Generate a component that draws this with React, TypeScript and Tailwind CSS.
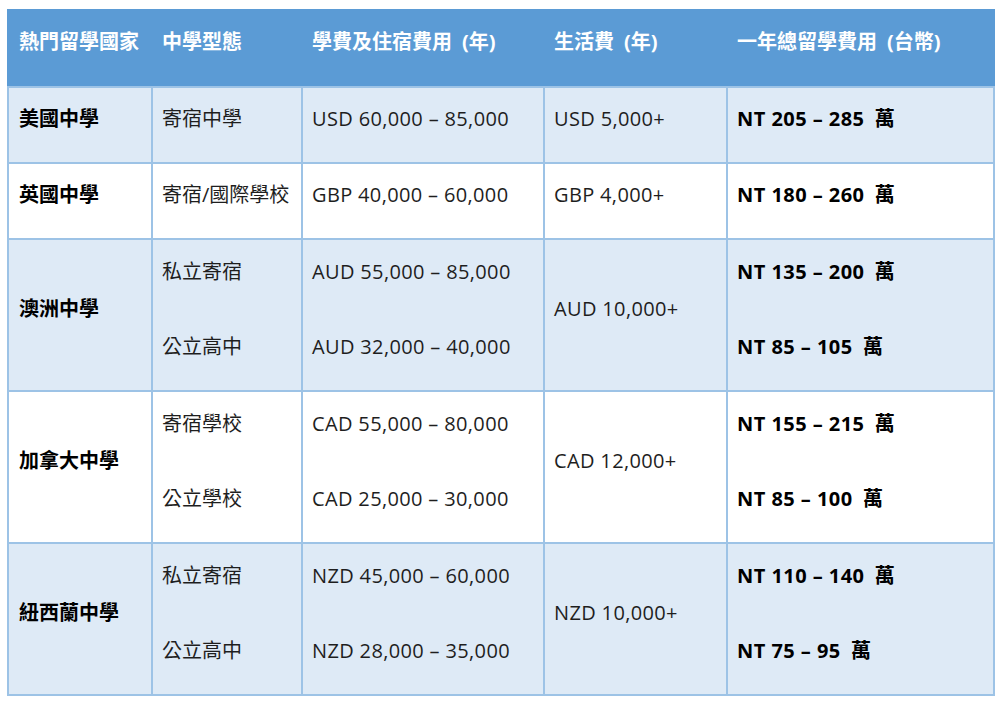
const font = "font-['Open_Sans','Noto_Sans_CJK_TC',sans-serif]";

type Row = {
  country: string;
  types: string[];
  tuition: string[];
  living: string;
  total: string[];
  light: boolean;
};

const rows: Row[] = [
  {
    country: "美國中學",
    types: ["寄宿中學"],
    tuition: ["USD 60,000 – 85,000"],
    living: "USD 5,000+",
    total: ["NT 205 – 285"],
    light: true,
  },
  {
    country: "英國中學",
    types: ["寄宿/國際學校"],
    tuition: ["GBP 40,000 – 60,000"],
    living: "GBP 4,000+",
    total: ["NT 180 – 260"],
    light: false,
  },
  {
    country: "澳洲中學",
    types: ["私立寄宿", "公立高中"],
    tuition: ["AUD 55,000 – 85,000", "AUD 32,000 – 40,000"],
    living: "AUD 10,000+",
    total: ["NT 135 – 200", "NT 85 – 105"],
    light: true,
  },
  {
    country: "加拿大中學",
    types: ["寄宿學校", "公立學校"],
    tuition: ["CAD 55,000 – 80,000", "CAD 25,000 – 30,000"],
    living: "CAD 12,000+",
    total: ["NT 155 – 215", "NT 85 – 100"],
    light: false,
  },
  {
    country: "紐西蘭中學",
    types: ["私立寄宿", "公立高中"],
    tuition: ["NZD 45,000 – 60,000", "NZD 28,000 – 35,000"],
    living: "NZD 10,000+",
    total: ["NT 110 – 140", "NT 75 – 95"],
    light: true,
  },
];

const cols = "grid grid-cols-[142px_148px_240px_181px_265px] gap-[2px]";

function Stack({ items, kind }: { items: string[]; kind: "cjk" | "num" | "total" }) {
  return (
    <div className="flex flex-col">
      {items.map((t) => (
        <div
          key={t}
          className={`flex items-center pl-[9px] pb-[12px] whitespace-pre ${
            items.length > 1 ? "h-[75px]" : "h-[74px]"
          } ${kind === "total" ? "font-bold text-black" : "text-[#1e1e1e]"}`}
        >
          {kind === "total" ? (
            <>
              <span className="tracking-[0.45px]">{t}</span>
              {"  萬"}
            </>
          ) : kind === "num" ? (
            <span className="tracking-[0.35px]">{t}</span>
          ) : (
            t
          )}
        </div>
      ))}
    </div>
  );
}

export default function App() {
  return (
    <div className={`min-h-screen bg-white pt-[9px] pl-[7px] text-[20px] leading-none ${font}`}>
      <div className="w-[988px]">
        <div className={`${cols} h-[77px] bg-[#5b9bd5] px-[2px] font-bold text-white`}>
          <div className="flex items-center pl-[10px] pb-[12px]">熱門留學國家</div>
          <div className="flex items-center pl-[9px] pb-[12px]">中學型態</div>
          <div className="flex items-center pl-[9px] pb-[12px] whitespace-pre">學費及住宿費用{"\u2002"}(年)</div>
          <div className="flex items-center pl-[9px] pb-[12px] whitespace-pre">生活費{"\u2002"}(年)</div>
          <div className="flex items-center pl-[9px] pb-[12px] whitespace-pre">一年總留學費用{"\u2002"}(台幣)</div>
        </div>
        <div className={`${cols} bg-[#9dc3e6] p-[2px]`}>
          {rows.map((r) => {
            const bg = r.light ? "bg-[#deeaf6]" : "bg-white";
            return [
              <div key={r.country + "c"} className={`${bg} flex items-center pl-[10px] pb-[12px] font-bold text-black`}>
                {r.country}
              </div>,
              <div key={r.country + "t"} className={bg}>
                <Stack items={r.types} kind="cjk" />
              </div>,
              <div key={r.country + "f"} className={bg}>
                <Stack items={r.tuition} kind="num" />
              </div>,
              <div key={r.country + "l"} className={`${bg} flex items-center pl-[9px] pb-[12px] text-[#1e1e1e] tracking-[0.35px]`}>
                {r.living}
              </div>,
              <div key={r.country + "n"} className={bg}>
                <Stack items={r.total} kind="total" />
              </div>,
            ];
          })}
        </div>
      </div>
    </div>
  );
}
